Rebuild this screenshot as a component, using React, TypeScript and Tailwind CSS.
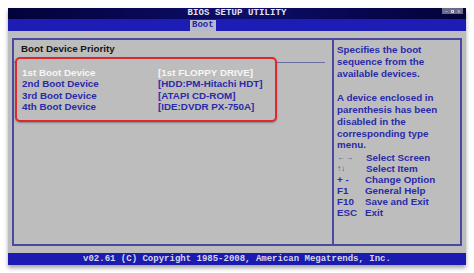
import React from 'react';

const BOOT_DEVICES = [
  { label: '1st Boot Device', value: '[1st FLOPPY DRIVE]', active: true },
  { label: '2nd Boot Device', value: '[HDD:PM-Hitachi HDT]', active: false },
  { label: '3rd Boot Device', value: '[ATAPI CD-ROM]', active: false },
  { label: '4th Boot Device', value: '[IDE:DVDR PX-750A]', active: false },
];

const KEYS = [
  { key: '←→', text: 'Select Screen', small: true },
  { key: '↑↓', text: 'Select Item', small: true },
  { key: '+ -', text: 'Change Option', small: false },
  { key: 'F1', text: 'General Help', small: false },
  { key: 'F10', text: 'Save and Exit', small: false },
  { key: 'ESC', text: 'Exit', small: false },
];

const sans = "font-['Liberation_Sans',Arial,sans-serif]";
const mono = "font-['Liberation_Mono','Courier_New',monospace]";

export default function App() {
  return (
    <div className="w-[474px] h-[273px] bg-white pt-[8px] px-[8px] overflow-hidden">
      <div className="w-[458px] flex flex-col shadow-[0_3px_4px_rgba(0,0,0,0.35)]">
        {/* title bar */}
        <div className="relative h-[11px] bg-gradient-to-r from-[#03033a] via-[#0e0e6a] to-[#03033a] flex items-center justify-center">
          <span className={`${mono} text-[9px] font-bold leading-none text-[#e4e4f0] tracking-[0.1px]`}>
            BIOS SETUP UTILITY
          </span>
          <div className="absolute right-[3px] top-0 h-[6px] w-[21px] bg-[#6a6a88] flex items-center justify-around px-[1px]">
            <span className="text-[6px] leading-none text-[#d0d0e0]">–</span>
            <span className="w-[3px] h-[3px] border border-[#d0d0e0]" />
            <span className="text-[6px] leading-none text-[#d0d0e0]">x</span>
          </div>
        </div>

        {/* tab band */}
        <div className="h-[12px] bg-[#1d1db6] flex items-end pl-[182px]">
          <div className={`${mono} h-[11px] px-[2px] bg-[#b6b8cc] text-[#2424a4] text-[9px] font-bold leading-[11px]`}>
            Boot
          </div>
        </div>

        {/* body */}
        <div className="h-[222px] bg-[#bdbdbd] px-[4px] pt-[7px] pb-[7px]">
          <div className={`${sans} h-[208px] border-2 border-[#4a4aa2] flex`}>
            {/* left section */}
            <div className="w-[318px] flex flex-col">
              <div className="pl-[7px] pt-[3px] pb-[7px] mr-[7px] border-b border-[#6c6ca4]">
                <div className="text-[9.8px] font-bold leading-[12px] text-[#151515]">Boot Device Priority</div>
              </div>
              <div className="relative -mt-[6px] ml-[1px] w-[262px] h-[65px] rounded-[5px] border-2 border-[#e0262e] bg-[#bdbdbd] shadow-[0_1px_2px_rgba(0,0,0,0.3)] pl-[5px] pt-[8px]">
                {BOOT_DEVICES.map((d) => (
                  <div key={d.label} className="flex text-[9.8px] font-bold leading-[11.3px]">
                    <span className={`w-[136px] ${d.active ? 'text-[#f6f6f6]' : 'text-[#2a2aaa]'}`}>{d.label}</span>
                    <span className={d.active ? 'text-[#f6f6f6]' : 'text-[#2a2aaa]'}>{d.value}</span>
                  </div>
                ))}
              </div>
            </div>

            {/* right section */}
            <div className="flex-1 border-l-2 border-[#4a4aa2] pl-[3px] pt-[4px] text-[#2a2aaa] font-bold text-[9.8px]">
              <div className="leading-[11.75px]">
                <p>Specifies the boot</p>
                <p>sequence from the</p>
                <p>available devices.</p>
              </div>
              <div className="leading-[11.75px] mt-[13px]">
                <p>A device enclosed in</p>
                <p>parenthesis has been</p>
                <p>disabled in the</p>
                <p>corresponding type</p>
                <p>menu.</p>
              </div>
              <div className="mt-[1px]">
                {KEYS.map((k) => (
                  <div key={k.text} className="flex leading-[11px]">
                    <span className={`w-[28px] ${k.small ? 'text-[8px] font-normal text-[#4a4a9a]' : ''}`}>{k.key}</span>
                    <span className={k.small ? 'ml-[1px]' : ''}>{k.text}</span>
                  </div>
                ))}
              </div>
            </div>
          </div>
        </div>

        {/* footer */}
        <div className="h-[12px] bg-[#1b1bb2] flex items-center justify-center">
          <span className={`${mono} text-[9px] font-bold leading-none text-[#d6d6e6]`}>
            v02.61 (C) Copyright 1985-2008, American Megatrends, Inc.
          </span>
        </div>
      </div>
    </div>
  );
}
